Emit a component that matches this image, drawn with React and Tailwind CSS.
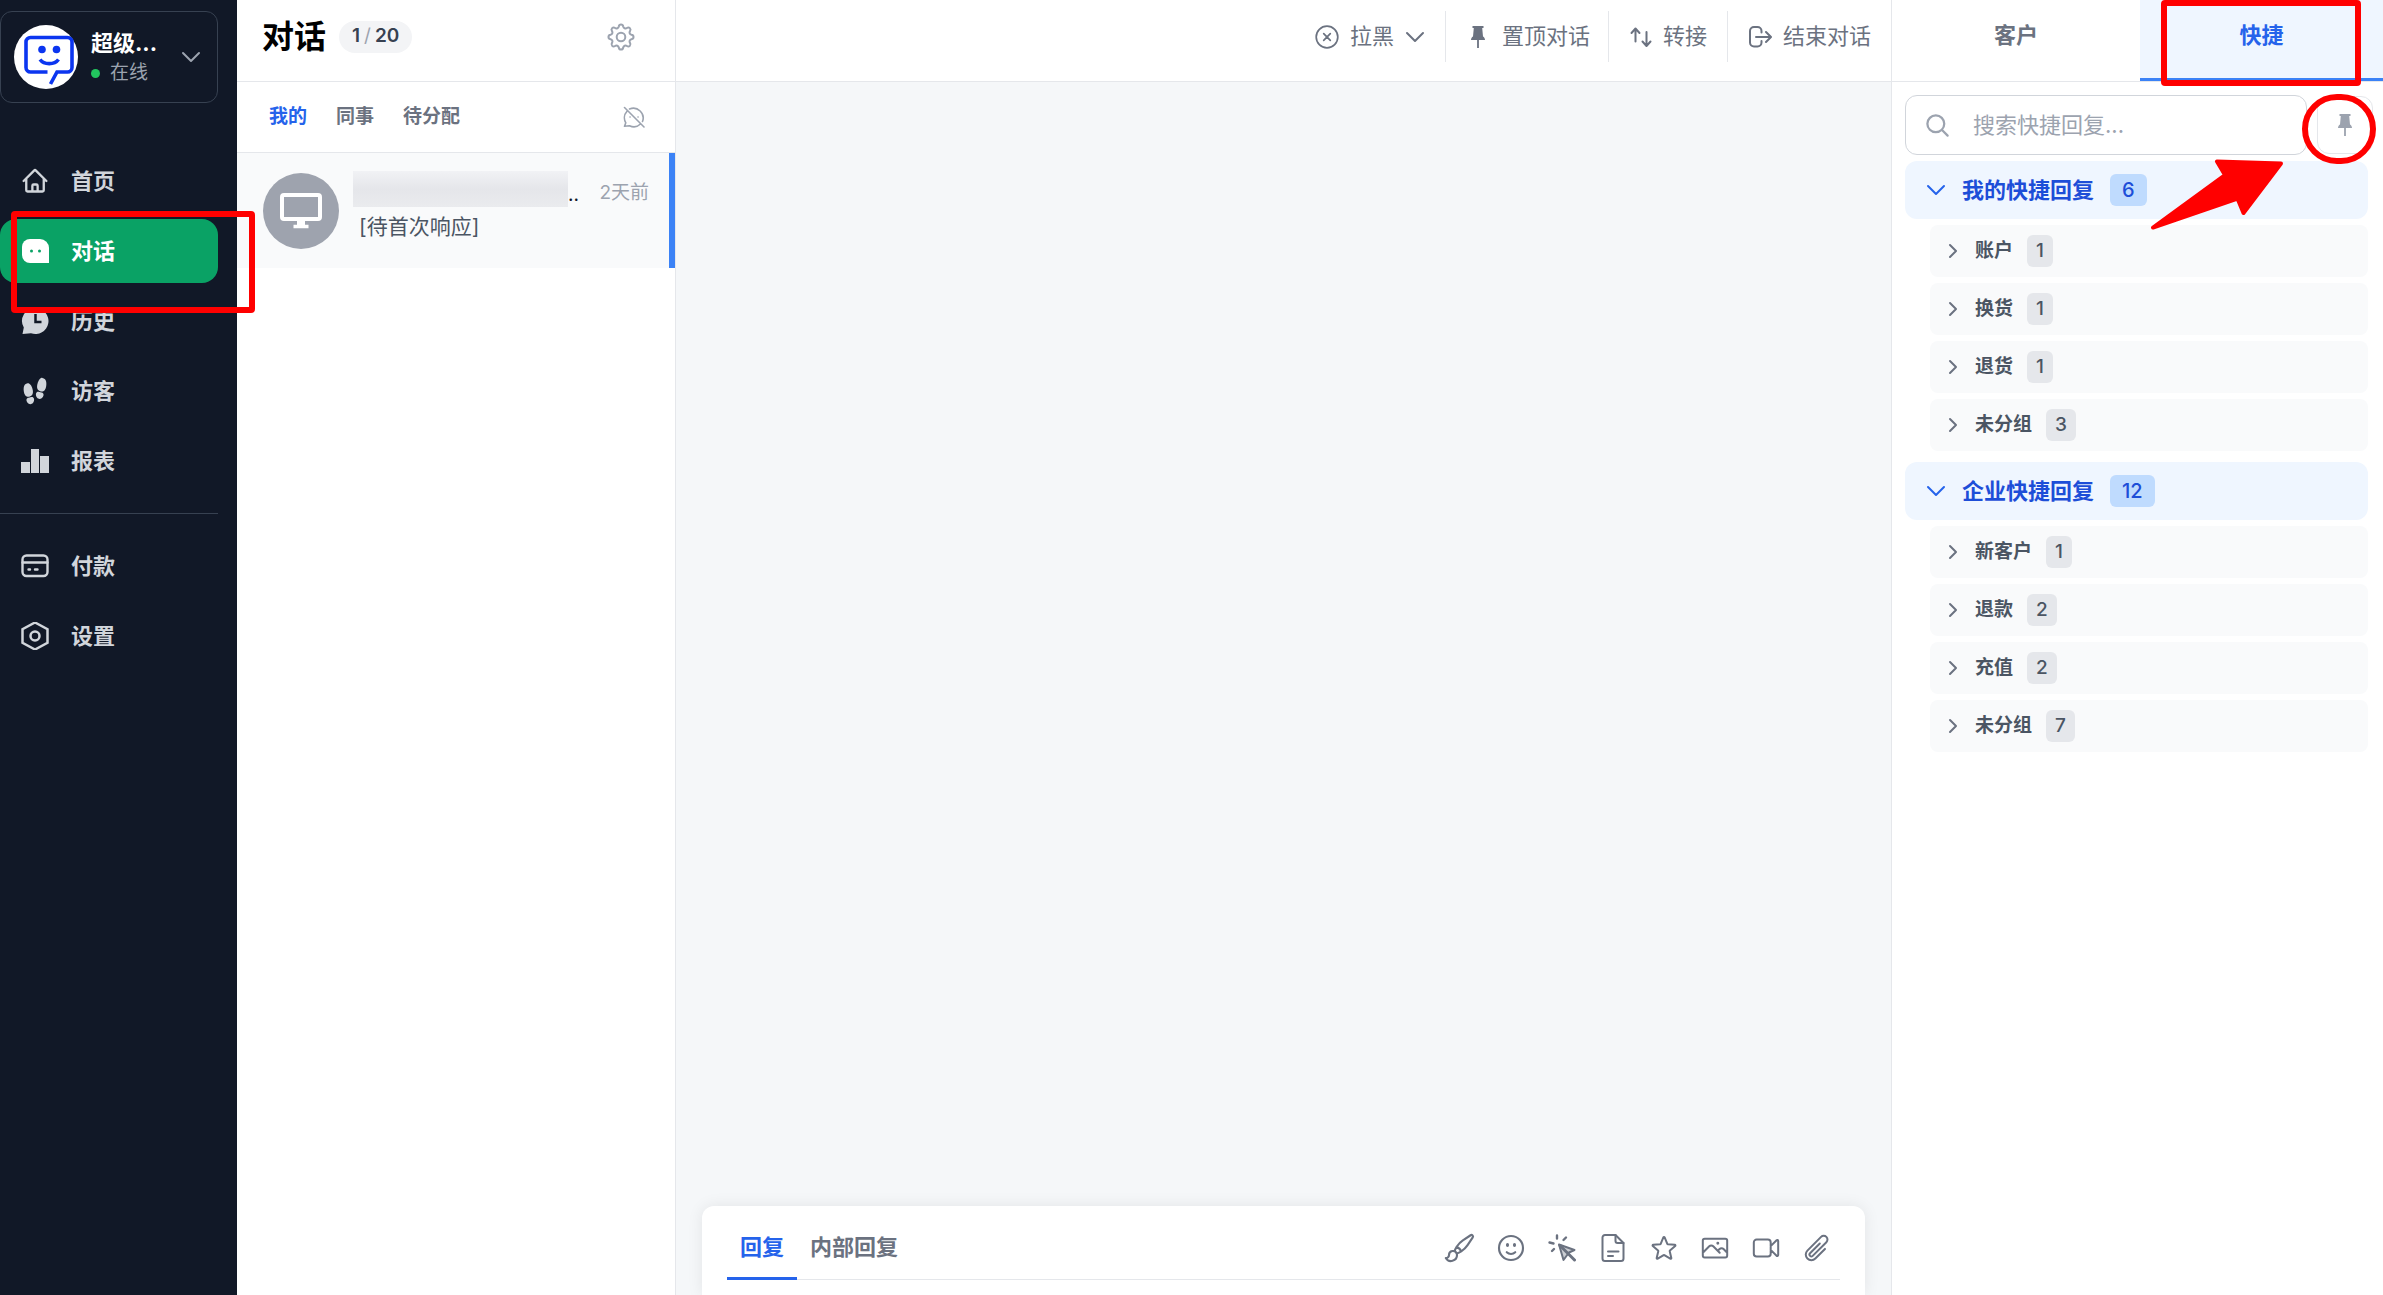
import React from "react";
import {
  HiOutlineHome,
  HiOutlineFaceSmile,
  HiOutlineStar,
  HiOutlinePhoto,
  HiOutlineVideoCamera,
  HiOutlinePaintBrush,
  HiOutlinePaperClip,
  HiOutlineMagnifyingGlass,
} from "react-icons/hi2";
import { IoFootsteps } from "react-icons/io5";

function Svg({ children, className = "size-7", width = 2, box = "0 0 24 24" }) {
  return (
    <svg
      viewBox={box}
      className={className}
      fill="none"
      stroke="currentColor"
      strokeWidth={width}
      strokeLinecap="round"
      strokeLinejoin="round"
      aria-hidden="true"
    >
      {children}
    </svg>
  );
}

const ChevronDown = ({ className }) => (
  <Svg className={className} box="0 0 20 20" width={2}>
    <path d="M2 6l8 8 8-8" />
  </Svg>
);

const ChevronRight = () => (
  <Svg className="size-4 text-[#6b7280]" box="0 0 16 16" width={2}>
    <path d="M5 2l6 6-6 6" />
  </Svg>
);

const Pin = ({ className }) => (
  <svg viewBox="0 0 16 24" className={className} fill="currentColor" aria-hidden="true">
    <path d="M2.500 1h11v2h-1.300l.8 8.500c1.200.7 2 1.900 2 3.500H8.900v8H7.100v-8H1c0-1.600.8-2.800 2-3.500L3.800 3H2.500z" />
  </svg>
);

const ChatIcon = () => (
  <svg viewBox="0 0 28 28" className="size-7" aria-hidden="true">
    <path d="M9 2h10a9 9 0 0 1 9 9v15H9a8 8 0 0 1-8-8v-8a8 8 0 0 1 8-8z" fill="currentColor" />
    <circle cx="10.500" cy="14" r="1.500" fill="#0aa265" />
    <circle cx="18.500" cy="14" r="1.500" fill="#0aa265" />
  </svg>
);

const HistoryIcon = () => (
  <svg viewBox="0 0 28 28" className="size-7" aria-hidden="true">
    <path d="M14.500 1a13 13 0 1 1-4.500 25.200L1.500 27l1.300-6.500A13 13 0 0 1 14.500 1z" fill="currentColor" />
    <path d="M14.500 7v8h6" fill="none" stroke="#111827" strokeWidth="2.500" />
  </svg>
);

const ChartIcon = () => (
  <svg viewBox="0 0 28 28" className="size-7" fill="currentColor" aria-hidden="true">
    <path d="M0 15h9v11H0zM10 2h8v24h-8zM19 9h9v17h-9z" />
  </svg>
);

const CardIcon = () => (
  <Svg box="0 0 28 28" width={2.4}>
    <rect x="1.500" y="3.500" width="25" height="20.500" rx="4" />
    <path d="M1.500 10.500h25M7.500 17.500h1.500M14 17.500h2.500" />
  </Svg>
);

const HexIcon = () => (
  <Svg box="0 0 28 28" width={2.5}>
    <path d="M14 0.500l12.500 6.700v13.600L14 27.500 1.500 20.800V7.200z" strokeLinejoin="miter" />
    <circle cx="14" cy="14" r="4.500" />
  </Svg>
);

const GearIcon = () => (
  <Svg box="0 0 28 28" width={2} className="size-7">
    <circle cx="14" cy="14" r="4.300" />
    <path d="M11.800 3.500 C12.200 0.800 15.800 0.800 16.200 3.500 C16.600 5.300 18.500 6 19.900 5 C22.100 3.500 24.500 5.900 23 8.100 C22 9.500 22.700 11.400 24.500 11.800 C27.200 12.200 27.200 15.800 24.500 16.200 C22.700 16.600 22 18.500 23 19.900 C24.500 22.100 22.100 24.500 19.900 23 C18.500 22 16.600 22.700 16.200 24.500 C15.800 27.200 12.200 27.200 11.800 24.500 C11.400 22.700 9.500 22 8.100 23 C5.900 24.500 3.500 22.100 5 19.900 C6 18.500 5.300 16.600 3.500 16.200 C0.800 15.800 0.800 12.200 3.500 11.800 C5.300 11.400 6 9.500 5 8.100 C3.500 5.900 5.900 3.500 8.100 5 C9.500 6 11.400 5.300 11.800 3.500z" />
  </Svg>
);

const ChatOffIcon = () => (
  <Svg box="0 0 24 24" width={1.6} className="size-6">
    <path d="M7.500 4A9.800 9.800 0 0 1 20.500 16.500M18.500 19a9.800 9.800 0 0 1-11 1.700L2.500 21.300l1.300-3.500A9.800 9.800 0 0 1 5 6.200M2.500 2.500l19.500 19.500M8 12h.1M16 12h.1" />
  </Svg>
);

const XCircle = () => (
  <Svg width={1.7} className="size-6">
    <circle cx="12" cy="12" r="10.800" />
    <path d="M8.700 8.700l6.600 6.600M15.300 8.700l-6.600 6.600" />
  </Svg>
);

const TransferIcon = () => (
  <Svg width={2} className="size-6">
    <path d="M6.500 16.500V4M2.500 8l4-4.500 4 4.500M17.500 7v13.500M13.500 16.500l4 4.500 4-4.500" />
  </Svg>
);

const ExitIcon = () => (
  <Svg width={2} className="size-6">
    <path d="M13.500 7.500V6a4 4 0 0 0-4-4H6a4 4 0 0 0-4 4v11.500a4 4 0 0 0 4 4h3.500a4 4 0 0 0 4-4V16M8 12h14.500M18 7l5 5-5 5" />
  </Svg>
);

const ClickIcon = () => (
  <svg viewBox="0 0 28 28" className="size-7" aria-hidden="true" fill="none" stroke="currentColor" strokeLinecap="round" strokeLinejoin="round">
    <path d="M9 1.500v3M1.500 8.500l4 1M18 3.500l-2.500 2.500M6 15l-2 2" strokeWidth="2.400" />
    <path d="M11 10.500l15.500 5.500-5.500 2.500-5.500 7.500z" strokeWidth="2" fill="currentColor" fillOpacity="0.350" />
    <path d="M12 11.500l6.500 6.500 8 8" strokeWidth="3" />
  </svg>
);

const DocIcon = () => (
  <Svg box="0 0 28 28" width={2}>
    <path d="M16.500 1H6a2.500 2.500 0 0 0-2.500 2.500v21A2.500 2.500 0 0 0 6 27h16a2.500 2.500 0 0 0 2.500-2.500V9z" />
    <path d="M16.500 1v6a2 2 0 0 0 2 2h6M9 17.500h10.500M9 22h5" />
  </Svg>
);

const MonitorIcon = () => (
  <svg viewBox="0 0 42 36" className="w-[42px] text-white" fill="none" stroke="currentColor" aria-hidden="true">
    <rect x="2" y="2" width="38" height="24" rx="2" strokeWidth="4" />
    <path d="M21 26v7M13.500 33.500h15" strokeWidth="3.500" />
    <path d="M17 27h8v6h-8z" fill="currentColor" stroke="none" />
  </svg>
);

const RobotLogo = () => (
  <svg viewBox="0 0 64 64" className="size-16 shrink-0" aria-hidden="true">
    <circle cx="32" cy="32" r="32" fill="#fff" />
    <g fill="none" stroke="#0b35f0" strokeWidth="3.600">
      <path d="M33.500 47H16.500a4.500 4.500 0 0 1-4.500-4.500V17a4.500 4.500 0 0 1 4.500-4.500h37A4.500 4.500 0 0 1 58 17v25.500a4.500 4.500 0 0 1-4.500 4.500H43l-6.500 12" />
      <path d="M26 34.500c4 5.500 14.500 5.500 18.500 0" />
    </g>
    <circle cx="28" cy="24.500" r="3.800" fill="#0b35f0" />
    <circle cx="42.500" cy="24.500" r="3.800" fill="#0b35f0" />
  </svg>
);

const mainNav = [
  { label: "首页", icon: <HiOutlineHome className="size-7" strokeWidth={2} /> },
  { label: "对话", icon: <ChatIcon />, active: true },
  { label: "历史", icon: <HistoryIcon /> },
  { label: "访客", icon: <IoFootsteps className="size-7" /> },
  { label: "报表", icon: <ChartIcon /> },
];

const otherNav = [
  { label: "付款", icon: <CardIcon /> },
  { label: "设置", icon: <HexIcon /> },
];

function NavList({ items }) {
  return (
    <ul className="flex flex-col gap-1.5">
      {items.map((item) => (
        <li key={item.label}>
          <a
            href="#"
            className={
              item.active
                ? "flex h-16 items-center gap-[22px] rounded-2xl bg-[#0aa265] pl-[21px] text-[22px] font-semibold text-white"
                : "flex h-16 items-center gap-[22px] rounded-2xl pl-[21px] text-[22px] font-semibold text-[#d1d5db]"
            }
          >
            {item.icon}
            {item.label}
          </a>
        </li>
      ))}
    </ul>
  );
}

function Sidebar() {
  return (
    <nav className="w-[237px] shrink-0 bg-[#111827] pt-[11px] pr-[19px]">
      <button type="button" className="flex h-[92px] w-full items-center rounded-xl border border-[#374151] pr-4 pl-[13px] text-left">
        <RobotLogo />
        <span className="ml-[13px] flex-1">
          <span className="block text-[22px] leading-8 font-bold text-white">超级...</span>
          <span className="flex items-center gap-2.5 text-[19px] leading-7 text-[#9ca3af]">
            <span className="size-[9px] rounded-full bg-[#22c55e]" />
            在线
          </span>
        </span>
        <ChevronDown className="size-5 text-[#9ca3af]" />
      </button>
      <div className="mt-[46px]">
        <NavList items={mainNav} />
      </div>
      <hr className="mt-5 mb-5 border-[#374151]" />
      <NavList items={otherNav} />
    </nav>
  );
}

function ConversationList() {
  return (
    <section className="w-[439px] shrink-0 border-r border-[#e5e7eb] bg-white">
      <header className="flex h-[82px] items-center border-b border-[#e5e7eb] pr-10 pb-2 pl-[25px]">
        <h1 className="text-[32px] font-bold text-black">对话</h1>
        <span className="ml-[13px] flex h-8 items-center gap-1 rounded-full bg-[#f3f4f6] px-[13px] text-[19px] font-semibold text-[#374151]">
          <span>1</span>
          <span className="font-normal text-[#9ca3af]">/</span>
          <span>20</span>
        </span>
        <button type="button" aria-label="对话设置" className="ml-auto text-[#9ca3af]">
          <GearIcon />
        </button>
      </header>
      <div className="flex h-[71px] items-center gap-[29px] border-b border-[#e5e7eb] pr-[29px] pl-8 text-[19px] font-semibold text-[#6b7280]">
        <button type="button" className="text-[#2563eb]">我的</button>
        <button type="button">同事</button>
        <button type="button">待分配</button>
        <button type="button" aria-label="关闭提醒" className="ml-auto text-[#9ca3af]">
          <ChatOffIcon />
        </button>
      </div>
      <a href="#" className="flex h-[115px] items-center border-r-[6px] border-[#3b82f6] bg-[#f9fafb] pr-5 pl-[26px]">
        <span className="flex size-[76px] shrink-0 items-center justify-center rounded-full bg-[#9ea3ae] text-white">
          <MonitorIcon />
        </span>
        <span className="ml-3.5 flex-1 pb-1">
          <span className="flex items-end text-[19px]">
            <span className="h-9 w-[215px] bg-linear-to-b from-[#f1f2f5] via-[#e5e6ea] to-[#eaebee]" />
            <span className="leading-6 text-gray-900">..</span>
            <span className="ml-auto leading-7 text-[#9ca3af]">2天前</span>
          </span>
          <span className="block pl-1.5 text-[21px] leading-10 text-[#4b5563]">[待首次响应]</span>
        </span>
      </a>
    </section>
  );
}

const replyTools = [
  { label: "画笔", icon: <HiOutlinePaintBrush className="size-8" strokeWidth={1.6} /> },
  { label: "表情", icon: <HiOutlineFaceSmile className="size-8" strokeWidth={1.6} /> },
  { label: "点击", icon: <ClickIcon /> },
  { label: "文档", icon: <DocIcon /> },
  { label: "收藏", icon: <HiOutlineStar className="size-[30px]" strokeWidth={1.6} /> },
  { label: "图片", icon: <HiOutlinePhoto className="size-[30px]" strokeWidth={1.6} /> },
  { label: "视频", icon: <HiOutlineVideoCamera className="size-[30px]" strokeWidth={1.6} /> },
  { label: "附件", icon: <HiOutlinePaperClip className="size-[30px]" strokeWidth={1.6} /> },
];

function ChatPane() {
  return (
    <main className="flex min-w-0 flex-1 flex-col bg-[#f5f7f9]">
      <header className="flex h-[82px] items-start justify-end border-b border-[#e5e7eb] bg-white pt-[11px] text-[22px] text-[#6b7280]">
        <div className="flex h-[51px] divide-x divide-[#e5e7eb]">
          <button type="button" className="flex items-center gap-[11px] px-5">
            <XCircle />
            拉黑
            <ChevronDown className="size-5" />
          </button>
          <button type="button" className="flex items-center gap-2.5 px-[18px]">
            <span className="flex size-7 items-center justify-center">
              <Pin className="h-6" />
            </span>
            置顶对话
          </button>
          <button type="button" className="flex items-center gap-2.5 px-5">
            <TransferIcon />
            转接
          </button>
          <button type="button" className="flex items-center gap-[11px] px-5">
            <ExitIcon />
            结束对话
          </button>
        </div>
      </header>
      <section className="mx-[26px] mt-auto rounded-t-xl bg-white px-[25px] pb-[15px] shadow-[0_0_16px_rgba(0,0,0,0.08)]">
        <div className="flex h-[74px] items-end justify-between border-b border-[#e5e7eb]">
          <div className="flex h-[62px] text-[22px] font-semibold text-[#6b7280]">
            <button type="button" className="-mb-px border-b-[3px] border-[#2563eb] px-[13px] text-[#2563eb]">回复</button>
            <button type="button" className="-mb-px border-b-[3px] border-transparent px-[13px]">内部回复</button>
          </div>
          <div className="-mr-0.5 flex h-[62px] items-center text-[#6b7280]">
            {replyTools.map((tool) => (
              <button key={tool.label} type="button" aria-label={tool.label} className="flex w-[51px] justify-center">
                {tool.icon}
              </button>
            ))}
          </div>
        </div>
      </section>
    </main>
  );
}

const groups = [
  {
    name: "我的快捷回复",
    count: 6,
    rows: [["账户", 1], ["换货", 1], ["退货", 1], ["未分组", 3]],
  },
  {
    name: "企业快捷回复",
    count: 12,
    rows: [["新客户", 1], ["退款", 2], ["充值", 2], ["未分组", 7]],
  },
];

function QuickPanel() {
  return (
    <aside className="w-[492px] shrink-0 border-l border-[#e5e7eb] bg-white">
      <div className="flex h-[82px] border-b border-[#e5e7eb] text-[22px] font-semibold">
        <button type="button" className="w-[248px] pb-2.5 text-[#6b7280]">客户</button>
        <button type="button" className="flex-1 border-b-[3px] border-[#3b82f6] bg-[#eff6ff] pb-2 text-[#2563eb]">快捷</button>
      </div>
      <div className="flex items-center gap-2.5 pt-[13px] pr-2.5 pl-[13px]">
        <label className="flex h-[60px] flex-1 items-center gap-[22px] rounded-xl border border-[#d1d5db] pl-[18px]">
          <HiOutlineMagnifyingGlass className="size-[27px] shrink-0 text-[#9ca3af]" strokeWidth={2} />
          <input
            type="text"
            aria-label="搜索快捷回复"
            placeholder="搜索快捷回复..."
            className="w-full min-w-0 text-[22px] outline-none placeholder:text-[#9ca3af]"
          />
        </label>
        <button type="button" aria-label="固定" className="flex h-[58px] w-14 items-center justify-center rounded-xl border border-[#e5e7eb] text-[#9ca3af]">
          <Pin className="h-6" />
        </button>
      </div>
      <div className="flex flex-col gap-[11px] pt-1.5 pr-[15px] pl-[13px]">
        {groups.map((group) => (
          <section key={group.name}>
            <button type="button" className="flex h-[58px] w-full items-center rounded-xl bg-[#eff6ff] pl-[21px] text-[22px] font-bold text-[#1d4ed8]">
              <ChevronDown className="size-5 text-[#2563eb]" />
              <span className="ml-4">{group.name}</span>
              <span className="ml-4 flex h-8 items-center rounded-md bg-[#bfdbfe] px-3 text-[20px] font-medium">{group.count}</span>
            </button>
            <ul className="mt-1.5 flex flex-col gap-1.5 pl-[25px]">
              {group.rows.map(([label, count]) => (
                <li key={label}>
                  <button type="button" className="flex h-[52px] w-full items-center rounded-lg bg-[#f9fafb] pl-[15px] text-[19px] font-semibold text-[#4b5563]">
                    <ChevronRight />
                    <span className="ml-3.5">{label}</span>
                    <span className="ml-3.5 flex h-8 items-center rounded-md bg-[#e5e7eb] px-[9px] font-medium">{count}</span>
                  </button>
                </li>
              ))}
            </ul>
          </section>
        ))}
      </div>
    </aside>
  );
}

function Annotations() {
  return (
    <div className="pointer-events-none" aria-hidden="true">
      <div className="absolute top-[211px] left-[11px] h-[102px] w-[244px] rounded-sm border-[6px] border-[#ff0000]" />
      <div className="absolute top-0 right-[22px] h-[86px] w-[200px] rounded-sm border-[6px] border-[#ff0000]" />
      <div className="absolute top-[94px] right-[7px] h-[70px] w-[74px] rounded-full border-[6px] border-[#ff0000]" />
      <svg viewBox="0 0 134 72" className="absolute top-[158px] right-[99px] w-[134px]" fill="#ff0000" stroke="#ff0000" strokeWidth="4" strokeLinejoin="round">
        <path d="M3 69.500L75 17l-8-13.500 64 2L93.500 55l-6-14.500z" />
      </svg>
    </div>
  );
}

export default function App() {
  return (
    <div className="relative flex h-screen overflow-hidden bg-white font-['Inter','Noto_Sans_CJK_SC',sans-serif]">
      <Sidebar />
      <ConversationList />
      <ChatPane />
      <QuickPanel />
      <Annotations />
    </div>
  );
}
